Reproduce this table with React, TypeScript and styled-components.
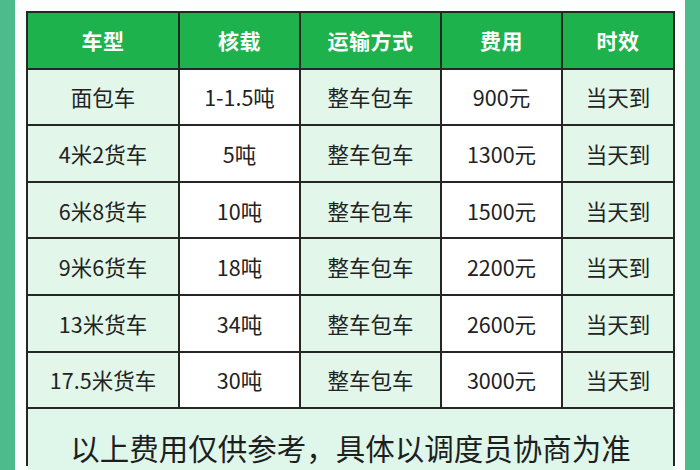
import React from 'react';
import styled, { createGlobalStyle } from 'styled-components';

const GlobalStyle = createGlobalStyle`
  html, body {
    margin: 0;
    padding: 0;
    height: 470px;
    overflow: hidden;
    background: #4dbb8c;
  }
  body {
    font-family: "Noto Sans CJK SC", "Noto Sans", sans-serif;
  }
`;

const Frame = styled.div`
  display: flex;
  justify-content: center;
  width: 700px;
  height: 470px;
  background: #4dbb8c;
  padding: 0 15px;
  box-sizing: border-box;
`;

const Card = styled.div`
  flex: 1;
  background: #fdfffe;
  padding: 11px 11px 0 11px;
  overflow: hidden;
`;

const Table = styled.div`
  display: grid;
  grid-template-columns: 150px 119px 139px 119px 110px;
  grid-auto-rows: 54.6px;
  gap: 2px;
  padding: 2px;
  background: #262626;
  width: max-content;
`;

const HeadCell = styled.div`
  display: flex;
  align-items: center;
  justify-content: center;
  background: #1eb24c;
  color: #ffffff;
  font-size: 21px;
  font-weight: 700;
  letter-spacing: 0.5px;
`;

const Cell = styled.div<{ $tint: boolean }>`
  display: flex;
  align-items: center;
  justify-content: center;
  background: ${(p) => (p.$tint ? '#e2f7e9' : '#ffffff')};
  color: #222222;
  font-size: 21.5px;
  font-weight: 400;
`;

const Note = styled.div`
  grid-column: 1 / -1;
  height: 90px;
  display: flex;
  align-items: flex-start;
  justify-content: center;
  padding-top: 18px;
  box-sizing: border-box;
  background: #def7ea;
  color: #1e1e1e;
  font-size: 29.5px;
  line-height: 40px;
  font-weight: 400;
`;

const headers = ['车型', '核载', '运输方式', '费用', '时效'];

const rows = [
  ['面包车', '1-1.5吨', '整车包车', '900元', '当天到'],
  ['4米2货车', '5吨', '整车包车', '1300元', '当天到'],
  ['6米8货车', '10吨', '整车包车', '1500元', '当天到'],
  ['9米6货车', '18吨', '整车包车', '2200元', '当天到'],
  ['13米货车', '34吨', '整车包车', '2600元', '当天到'],
  ['17.5米货车', '30吨', '整车包车', '3000元', '当天到'],
];

const App: React.FC = () => {
  return (
    <>
      <GlobalStyle />
      <Frame>
        <Card>
          <Table>
            {headers.map((h) => (
              <HeadCell key={h}>{h}</HeadCell>
            ))}
            {rows.map((row, r) =>
              row.map((v, c) => (
                <Cell key={`${r}-${c}`} $tint={c % 2 === 0}>
                  {v}
                </Cell>
              ))
            )}
            <Note>以上费用仅供参考，具体以调度员协商为准</Note>
          </Table>
        </Card>
      </Frame>
    </>
  );
};

export default App;
